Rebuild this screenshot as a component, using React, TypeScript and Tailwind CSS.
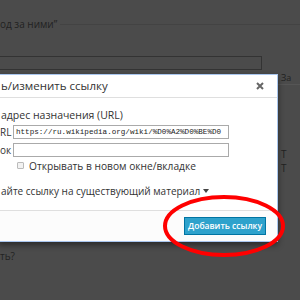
import React from "react";

export default function App() {
  return (
    <div
      className="relative w-[300px] h-[300px] overflow-hidden bg-[#4b4b4b] text-[#1e1e1e]"
      style={{ fontFamily: '"Open Sans", "Noto Sans", sans-serif' }}
    >
      {/* dimmed page behind */}
      <div className="flex items-center pt-[16px] h-[32px]">
        <span className="text-[10px] leading-[16px] whitespace-nowrap text-[#222]">од за ними”</span>
        <div className="flex-1 h-px bg-[#434343] ml-[3px]" />
      </div>
      <div className="mt-[24px] -ml-px w-[263px] h-[14px] border border-[#333]" />
      <div className="flex">
        <div className="flex-1 pt-[172px]">
          <span className="text-[10px] leading-[16px] text-[#222]">ть?</span>
        </div>
        <div className="w-[19px] flex flex-col">
          <span className="text-[9px] leading-[12px] text-[#222] mt-[2px]">За</span>
          <div className="h-px bg-[#555] -ml-[5px]" />
          <span className="text-[10px] leading-[14px] text-[#222] mt-[62px]">Т</span>
          <span className="text-[10px] leading-[14px] text-[#222]">Т</span>
        </div>
      </div>

      {/* modal dialog */}
      <div className="absolute left-[-2px] top-[74px] w-[280px] flex flex-col bg-white border border-[#a9c6ee] shadow-[0_3px_6px_rgba(0,0,0,0.45)]">
        <div className="h-[23px] flex items-center justify-between border-b border-[#dfdfdf] pl-[2px] pr-[13px]">
          <span className="text-[11.5px] leading-[16px] text-[#333] whitespace-nowrap">ь/изменить ссылку</span>
          <svg width="8" height="8" viewBox="0 0 8 8" className="mt-[-1px]">
            <path d="M1 1L7 7M7 1L1 7" stroke="#666" strokeWidth="2" />
          </svg>
        </div>
        <div className="h-[112px] pl-[2px] pr-[48px] pt-[9px] flex flex-col text-[#333]">
          <span className="text-[10.5px] leading-[16px] whitespace-nowrap">адрес назначения (URL)</span>
          <div className="mt-[2px] flex items-center">
            <span className="w-[12px] text-[10px] leading-[14px] whitespace-nowrap -ml-[1px]">RL</span>
            <div className="flex-1 h-[14px] border border-[#aaa] overflow-hidden pl-[2px] flex items-center ml-[1px]">
              <span
                className="text-[7.6px] leading-[10px] whitespace-nowrap text-[#222]"
                style={{ fontFamily: '"Liberation Mono", "DejaVu Sans Mono", monospace' }}
              >
                https://ru.wikipedia.org/wiki/%D0%A2%D0%BE%D0
              </span>
            </div>
          </div>
          <div className="mt-[4px] flex items-center">
            <span className="w-[12px] text-[10px] leading-[14px] whitespace-nowrap -ml-[1px]">ок</span>
            <div className="flex-1 h-[14px] border border-[#aaa] ml-[1px]" />
          </div>
          <div className="mt-[1px] h-[15px] flex items-center pl-[16px]">
            <div className="w-[7px] h-[7px] rounded-[1px] border border-[#bbb] bg-[#f2f2f2]" />
            <span className="ml-[5px] text-[10.2px] leading-[14px] whitespace-nowrap">Открывать в новом окне/вкладке</span>
          </div>
          <div className="mt-[10px] flex items-center whitespace-nowrap">
            <span className="text-[10px] leading-[16px]">айте ссылку на существующий материал</span>
            <svg width="6" height="5" viewBox="0 0 6 5" className="ml-[3px]">
              <path d="M0 0H6L3 4Z" fill="#444" />
            </svg>
          </div>
        </div>
        <div className="h-[31px] border-t border-[#dfdfdf] bg-[#fcfcfc] flex items-start justify-end pr-[11px] pt-[6px]">
          <div className="w-[82px] h-[18px] bg-[#2ea2cc] border border-[#0074a2] flex items-center justify-center">
            <span className="text-[8.5px] leading-[12px] font-semibold text-white whitespace-nowrap">Добавить ссылку</span>
          </div>
        </div>
      </div>

      {/* red annotation ellipse */}
      <svg className="absolute left-[162px] top-[194px]" width="124" height="64" viewBox="0 0 124 64">
        <ellipse cx="62" cy="32" rx="59" ry="29" fill="none" stroke="#ff0000" strokeWidth="4" />
      </svg>
    </div>
  );
}
